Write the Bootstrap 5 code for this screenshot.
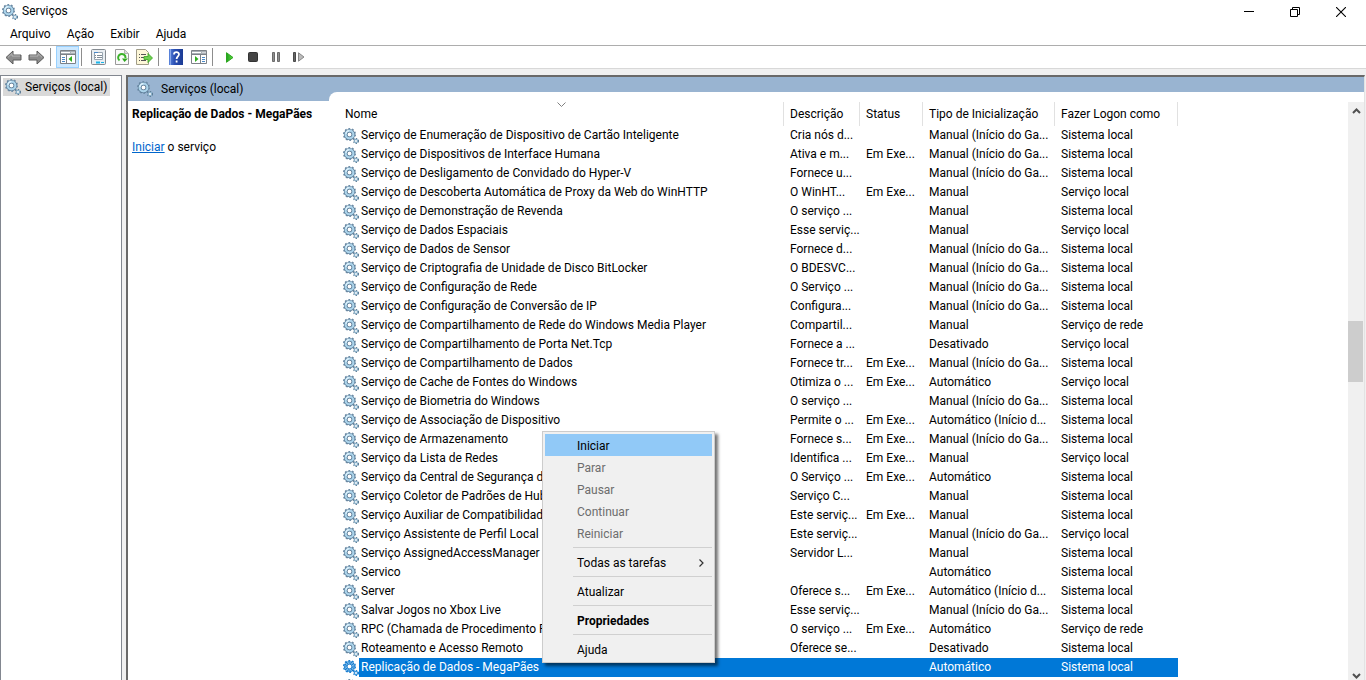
<!DOCTYPE html>
<html lang="pt-BR">
<head>
<meta charset="utf-8">
<meta name="viewport" content="width=device-width, initial-scale=1">
<title>Serviços</title>
<link rel="stylesheet" href="https://cdn.jsdelivr.net/npm/bootstrap@5.3.0/dist/css/bootstrap.min.css">
<style>
  body { font: 12px/19px Roboto, "Noto Sans", sans-serif; color: #000; background: #fff; }
  .console { height: 100vh; }
  .console button { font: inherit; color: inherit; border: 0; background: none; padding: 0; }
  svg { display: block; flex: none; }
  .title-bar { height: 23px; padding: 0 2px; }
  .win-btn { width: 46px; height: 22px; }
  .menu-bar { height: 22px; padding-left: 2px; }
  .console .menu-bar button { padding: 0 8px; }
  .tool-bar { height: 24px; padding-left: 2px; border-top: 1px solid #adadad; border-bottom: 1px solid #d8d8d8; }
  .console .tool { width: 23px; height: 22px; }
  .console .tool.pressed { background: #cce8ff; border: 1px solid #99d1ff; }
  .rule-v { width: 1px; height: 18px; margin: 0 5px 0 2px; background: #8d8d8d; }
  .workspace { min-height: 0; background: #f0f0f0; padding-top: 6px; padding-right: 1px; gap: 4px; }
  .tree-pane { width: 122px; background: #fff; border: 1px solid #828790; border-bottom: 0; }
  .tree-item { width: max-content; margin: 2px; padding: 0 3px 0 2px; height: 18px; line-height: 18px; background: #d9d9d9; gap: 4px; color: #000; text-decoration: none; }
  .tree-item:hover { color: #000; }
  .result-pane { background: #fff; border-left: 2px solid #696969; border-top: 2px solid #696969; border-right: 1px solid #e3e3e3; }
  .side-pane { width: 201px; }
  .pane-head { height: 24px; background: #99b4d1; padding-left: 9px; gap: 8px; }
  .side-text { padding: 4px; }
  .side-text a { color: #0066cc; }
  .side-text h1 { font-size: 12px; line-height: 19px; font-weight: 700; margin: 0 0 14px; }
  .list-top { height: 15px; background: #99b4d1; }
  .list-pane { min-width: 0; background: #99b4d1; }
  .list-body { min-height: 0; background: #fff; border-top-left-radius: 8px; }
  .table-wrap { padding: 10px 0 0 10px; }
  .services { width: 839px; table-layout: fixed; border-collapse: separate; border-spacing: 0; }
  .services th, .services td { padding: 0 0 0 6px; height: 19px; font-weight: 400; white-space: nowrap; overflow: hidden; }
  .services th { height: 24px; border-right: 1px solid #e1e1e1; line-height: 24px; }
  .services td:first-child { padding-left: 4px; }
  .c-name { width: 445px; } .c-desc { width: 76px; } .c-stat { width: 63px; } .c-type { width: 132px; } .c-user { width: 123px; }
  .svc { height: 19px; }
  .svc span { padding-left: 2px; flex: 1; height: 19px; }
  tr.selected td:not(:first-child), tr.selected .svc span { background: #0078d7; color: #fff; }
  .sort-mark { top: 10px; left: 228px; }
  .scroll { width: 16px; background: #f0f0f0; margin-top: 10px; padding: 6px 0 1px; }
  .thumb { width: 15px; height: 61px; background: #cdcdcd; }
  .track-top { flex: 207; } .track-bottom { flex: 291; }
  .context { left: 213px; top: 339px; width: 173px; padding: 2px; background: #f0f0f0; border: 1px solid #ccc; box-shadow: 3px 3px 3px rgba(0,0,0,.55); }
  .console .context button { display: flex; align-items: center; width: 100%; height: 22px; padding: 2px 8px 0 32px; text-align: left; }
  .console .context .active-item { background: #91c9f7; }
  .console .context button:disabled { color: #6d6d6d; }
  .context hr { margin: 3px 0 3px 28px; border-top: 1px solid #d0d0d0; opacity: 1; }
</style>
</head>
<body>
<svg width="0" height="0" class="position-absolute" aria-hidden="true">
  <defs>
    <symbol id="gear" viewBox="0 0 16 16">
      <circle cx="6.500" cy="6.500" r="5.700" fill="none" stroke="#6f8ea8" stroke-width="1.700" stroke-dasharray="1.790 1.790"/>
      <circle cx="6.500" cy="6.500" r="3.800" fill="#fff" stroke="#55748f" stroke-width="3.600"/>
      <circle cx="6.500" cy="6.500" r="3.900" fill="none" stroke="#abd3ea" stroke-width="2.300"/>
      <path d="M3 6a3.600 3.600 0 0 1 3.500-3.300" fill="none" stroke="#e0f3fc" stroke-width="1.200"/>
      <circle cx="13" cy="13" r="2.400" fill="none" stroke="#56768f" stroke-width="1.300" stroke-dasharray="1.250 1.250"/>
      <circle cx="13" cy="13" r="1.600" fill="#fff" stroke="#8ab0c9" stroke-width="1.300"/>
    </symbol>
    <symbol id="gear-sel" viewBox="0 0 16 16">
      <circle cx="6.500" cy="6.500" r="5.700" fill="none" stroke="#1a7fd0" stroke-width="1.700" stroke-dasharray="1.790 1.790"/>
      <circle cx="6.500" cy="6.500" r="3.800" fill="#fff" stroke="#0f74ca" stroke-width="3.600"/>
      <circle cx="6.500" cy="6.500" r="3.900" fill="none" stroke="#8cc6ee" stroke-width="2.600" stroke-dasharray="1 1"/>
      <circle cx="13" cy="13" r="2.400" fill="none" stroke="#1679cc" stroke-width="1.300" stroke-dasharray="1.250 1.250"/>
      <circle cx="13" cy="13" r="1.600" fill="#fff" stroke="#3d97dc" stroke-width="1.300"/>
    </symbol>
    <symbol id="arrow" viewBox="0 0 17 15">
      <path d="M1 7.500 8 1v4h8v5H8v4z" fill="#8c8c8c" stroke="#5c5c5c"/>
      <path d="M3 7.300 7 3.500V6h8" fill="none" stroke="#b5b5b5"/>
    </symbol>
    <linearGradient id="green" x2="1"><stop stop-color="#1fa01f"/><stop offset="1" stop-color="#5fdc3f"/></linearGradient>
    <linearGradient id="blue" x2="1"><stop stop-color="#5c86dc"/><stop offset=".4" stop-color="#2a4fb4"/><stop offset="1" stop-color="#1b3b93"/></linearGradient>
  </defs>
</svg>

<div class="console d-flex flex-column overflow-hidden">
  <header class="title-bar d-flex align-items-center flex-shrink-0">
    <svg width="16" height="16"><use href="#gear"/></svg>
    <span class="flex-fill ps-1">Serviços</span>
    <button class="win-btn d-flex align-items-center justify-content-center" aria-label="Minimizar"><svg width="10" height="10"><path d="M0 4.500h10" stroke="#000"/></svg></button>
    <button class="win-btn d-flex align-items-center justify-content-center" aria-label="Restaurar"><svg width="10" height="10" fill="none" stroke="#000"><path d="M.5 2.500h7v7h-7zM2.500 2.500v-2h7v7h-2"/></svg></button>
    <button class="win-btn d-flex align-items-center justify-content-center" aria-label="Fechar"><svg width="10" height="10"><path d="m0 0 10 10m0-10-10 10" stroke="#000" stroke-width="1.100"/></svg></button>
  </header>

  <nav class="menu-bar d-flex align-items-center flex-shrink-0">
    <button>Arquivo</button><button>Ação</button><button>Exibir</button><button>Ajuda</button>
  </nav>

  <div class="tool-bar d-flex align-items-center flex-shrink-0" role="toolbar">
    <button class="tool d-flex align-items-center justify-content-center" aria-label="Voltar"><svg width="17" height="15"><use href="#arrow"/></svg></button>
    <button class="tool d-flex align-items-center justify-content-center" aria-label="Avançar"><svg width="17" height="15" viewBox="0 0 17 15"><use href="#arrow" width="17" height="15" transform="matrix(-1 0 0 1 17 0)"/></svg></button>
    <span class="rule-v"></span>
    <button class="tool pressed d-flex align-items-center justify-content-center" aria-label="Mostrar árvore"><svg width="16" height="14"><path d="M.5.5h15v13H.5z" fill="#fff" stroke="#7d8288"/><path d="M1 1h14v3H1z" fill="#a9b0b6"/><path d="M1 2.500h9m1.500 0h1m1 0h1" stroke="#fff"/><path d="M0 4.500h16M6.500 5v8" stroke="#7d8288"/><path d="M2 7.500h3m-3 2h3m-3 2h3" stroke="#4a89c8"/><path d="m12 6v6L8.500 9z" fill="#2fae1f"/></svg></button>
    <span class="rule-v"></span>
    <button class="tool d-flex align-items-center justify-content-center" aria-label="Propriedades"><svg width="15" height="16"><rect x=".5" y=".5" width="14" height="15" rx="1" fill="#e9eef2" stroke="#858b91"/><path d="M3.500 3.500h8v7h-8z" fill="#fff" stroke="#98a5b0"/><path d="M3 3.500h4" stroke="#4a89c8"/><path d="M4 6.500h1m1 0h5M4 8.500h1m1 0h5" stroke="#7f8c97"/><path d="M5 13.500h4" stroke="#19b5ea" stroke-width="2"/><path d="M10 13.500h3" stroke="#19b5ea"/></svg></button>
    <button class="tool d-flex align-items-center justify-content-center" aria-label="Atualizar"><svg width="14" height="16"><path d="M.5.5h9l4 4v11H.5z" fill="#fafafa" stroke="#9a9a9a"/><path d="M9.500.5v4h4" fill="#ddd" stroke="#b5b5b5"/><path d="M4.500 11.500A3.700 3.700 0 1 1 10.500 9" fill="none" stroke="#3cb22a" stroke-width="2"/><path d="M7 9.500h6L9.500 13z" fill="#2fa51f"/></svg></button>
    <button class="tool d-flex align-items-center justify-content-center" aria-label="Exportar lista"><svg width="17" height="16"><path d="M.5.5h9l3 3v12H.5z" fill="#fdf7d8" stroke="#a09c88"/><path d="M3 5.500h1m1 0h5m-7 3h1m1 0h3m-5 3h1m1 0h5" stroke="#555"/><path d="M8 7.500h4V4.500l4.500 4.500-4.500 4.500v-3H8z" fill="#6fd051" stroke="#36a51f" stroke-width=".8"/></svg></button>
    <span class="rule-v"></span>
    <button class="tool d-flex align-items-center justify-content-center" aria-label="Ajuda"><svg width="14" height="16"><path d="M0 0h14v16H0z" fill="url(#blue)"/><path d="M1.500 0v16" stroke="#8aa8ea"/><path d="M5 5.500C5 2.500 10 2.500 10 5.300 10 7.300 7.700 7.500 7.600 10M7.600 11.500v2" fill="none" stroke="#fff" stroke-width="1.800"/></svg></button>
    <button class="tool d-flex align-items-center justify-content-center" aria-label="Mostrar painel de ações"><svg width="16" height="14"><path d="M.5.5h15v13H.5z" fill="#fff" stroke="#7d8288"/><path d="M1 1h14v3H1z" fill="#a9b0b6"/><path d="M1 2.500h9m1.500 0h1m1 0h1" stroke="#fff"/><path d="M0 4.500h16M9.500 5v8" stroke="#7d8288"/><path d="M11 7.500h3m-3 2h3m-3 2h3" stroke="#4a89c8"/><path d="M4 6v6l3.500-3z" fill="#2fae1f"/></svg></button>
    <span class="rule-v"></span>
    <button class="tool d-flex align-items-center justify-content-center" aria-label="Iniciar"><svg width="8" height="11"><path d="M.5.700v9.600l6.500-4.800z" fill="url(#green)" stroke="#2ba51d"/></svg></button>
    <button class="tool d-flex align-items-center justify-content-center" aria-label="Parar"><svg width="10" height="10"><rect x=".5" y=".5" width="9" height="9" rx="1" fill="#454545" stroke="#333"/></svg></button>
    <button class="tool d-flex align-items-center justify-content-center" aria-label="Pausar"><svg width="8" height="10" fill="#8f8f8f" stroke="#6b6b6b"><path d="M.5.500h2v9h-2zM5.500.500h2v9h-2z"/></svg></button>
    <button class="tool d-flex align-items-center justify-content-center" aria-label="Reiniciar"><svg width="12" height="10"><path d="M.5.500h2v9h-2z" fill="#666" stroke="#4a4a4a"/><path d="M5.500.800v8.400l5.500-4.200z" fill="#bbb" stroke="#888"/></svg></button>
  </div>

  <main class="workspace d-flex flex-fill overflow-hidden">
    <aside class="tree-pane flex-shrink-0">
      <a href="#" class="tree-item d-flex align-items-center"><svg width="16" height="16"><use href="#gear"/></svg>Serviços (local)</a>
    </aside>

    <section class="result-pane d-flex flex-fill">
      <div class="side-pane flex-shrink-0">
        <div class="pane-head d-flex align-items-center"><svg width="16" height="16"><use href="#gear"/></svg>Serviços (local)</div>
        <div class="side-text"><h1>Replicação de Dados - MegaPães</h1><a href="#">Iniciar</a> o serviço</div>
      </div>

      <div class="list-pane flex-fill d-flex flex-column">
        <div class="list-top flex-shrink-0"></div>
        <div class="list-body position-relative flex-fill d-flex overflow-hidden">
          <div class="table-wrap flex-fill">
            <table class="services">
              <colgroup><col class="c-name"><col class="c-desc"><col class="c-stat"><col class="c-type"><col class="c-user"></colgroup>
              <thead><tr><th>Nome</th><th>Descrição</th><th>Status</th><th>Tipo de Inicialização</th><th>Fazer Logon como</th></tr></thead>
              <tbody id="rows"></tbody>
            </table>
          </div>
          <svg class="sort-mark position-absolute" width="9" height="6"><path d="m.5.5 4 4 4-4" fill="none" stroke="#808080"/></svg>
          <div class="scroll d-flex flex-column flex-shrink-0">
            <svg class="mx-auto" width="9" height="6"><path d="m1 5 3.500-3.500L8 5" fill="none" stroke="#505050" stroke-width="2"/></svg>
            <div class="track-top"></div><div class="thumb"></div><div class="track-bottom"></div>
            <svg class="mx-auto" width="9" height="6"><path d="m1 1 3.500 3.500L8 1" fill="none" stroke="#505050" stroke-width="2"/></svg>
          </div>
          <div class="context position-absolute" role="menu">
            <button class="active-item" role="menuitem">Iniciar</button>
            <button role="menuitem" disabled>Parar</button>
            <button role="menuitem" disabled>Pausar</button>
            <button role="menuitem" disabled>Continuar</button>
            <button role="menuitem" disabled>Reiniciar</button>
            <hr>
            <button role="menuitem"><span class="flex-fill">Todas as tarefas</span><svg width="5" height="8"><path d="m.5.500 3.500 3.500-3.500 3.500" fill="none" stroke="#333" stroke-width="1.200"/></svg></button>
            <hr>
            <button role="menuitem">Atualizar</button>
            <hr>
            <button class="fw-bold" role="menuitem">Propriedades</button>
            <hr>
            <button role="menuitem">Ajuda</button>
          </div>
        </div>
      </div>
    </section>
  </main>
</div>

<script src="https://cdn.jsdelivr.net/npm/bootstrap@5.3.0/dist/js/bootstrap.bundle.min.js"></script>
<script>
  // name | description | status | startup type | account
  const M = 'Manual', G = 'Manual (Início do Ga...', A = 'Automático', AI = 'Automático (Início d...', D = 'Desativado';
  const E = 'Em Exe...', S = 'Sistema local', L = 'Serviço local', R = 'Serviço de rede';
  const services = [
    ['Serviço de Enumeração de Dispositivo de Cartão Inteligente', 'Cria nós d...', '', G, S],
    ['Serviço de Dispositivos de Interface Humana', 'Ativa e m...', E, G, S],
    ['Serviço de Desligamento de Convidado do Hyper-V', 'Fornece u...', '', G, S],
    ['Serviço de Descoberta Automática de Proxy da Web do WinHTTP', 'O WinHT...', E, M, L],
    ['Serviço de Demonstração de Revenda', 'O serviço ...', '', M, S],
    ['Serviço de Dados Espaciais', 'Esse serviç...', '', M, L],
    ['Serviço de Dados de Sensor', 'Fornece d...', '', G, S],
    ['Serviço de Criptografia de Unidade de Disco BitLocker', 'O BDESVC...', '', G, S],
    ['Serviço de Configuração de Rede', 'O Serviço ...', '', G, S],
    ['Serviço de Configuração de Conversão de IP', 'Configura...', '', G, S],
    ['Serviço de Compartilhamento de Rede do Windows Media Player', 'Compartil...', '', M, R],
    ['Serviço de Compartilhamento de Porta Net.Tcp', 'Fornece a ...', '', D, L],
    ['Serviço de Compartilhamento de Dados', 'Fornece tr...', E, G, S],
    ['Serviço de Cache de Fontes do Windows', 'Otimiza o ...', E, A, L],
    ['Serviço de Biometria do Windows', 'O serviço ...', '', G, S],
    ['Serviço de Associação de Dispositivo', 'Permite o ...', E, AI, S],
    ['Serviço de Armazenamento', 'Fornece s...', E, G, S],
    ['Serviço da Lista de Redes', 'Identifica ...', E, M, L],
    ['Serviço da Central de Segurança do', 'O Serviço ...', E, A, S],
    ['Serviço Coletor de Padrões de Hub', 'Serviço C...', '', M, S],
    ['Serviço Auxiliar de Compatibilidad', 'Este serviç...', E, M, S],
    ['Serviço Assistente de Perfil Local', 'Este serviç...', '', G, L],
    ['Serviço AssignedAccessManager', 'Servidor L...', '', M, S],
    ['Servico', '', '', A, S],
    ['Server', 'Oferece s...', E, AI, S],
    ['Salvar Jogos no Xbox Live', 'Esse serviç...', '', G, S],
    ['RPC (Chamada de Procedimento F', 'O serviço ...', E, A, R],
    ['Roteamento e Acesso Remoto', 'Oferece se...', '', D, S],
    ['Replicação de Dados - MegaPães', '', '', A, S],
    ['', '', '', '', '']
  ];
  document.getElementById('rows').innerHTML = services.map(([name, ...rest]) => {
    const sel = name.startsWith('Replicação');
    return `<tr${sel ? ' class="selected"' : ''}><td><div class="svc d-flex align-items-center"><svg width="16" height="16"><use href="#gear${sel ? '-sel' : ''}"/></svg><span>${name}</span></div></td>${rest.map(t => `<td>${t}</td>`).join('')}</tr>`;
  }).join('');
</script>
</body>
</html>
